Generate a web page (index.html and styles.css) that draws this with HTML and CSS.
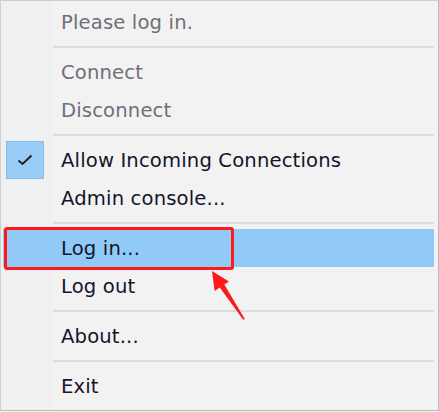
FILE: index.html
```html
<!DOCTYPE html>
<html>
<head>
<meta charset="utf-8">
<link rel="stylesheet" href="styles.css">
</head>
<body>
<div class="menu">
  <div class="item disabled"><span class="label">Please log in.</span></div>
  <div class="sep"></div>
  <div class="item disabled"><span class="label">Connect</span></div>
  <div class="item disabled"><span class="label">Disconnect</span></div>
  <div class="sep"></div>
  <div class="item">
    <span class="check"><svg width="16" height="12" viewBox="0 0 16 12"><path d="M1.5 6.5 L5.5 10 L14.5 1.5" fill="none" stroke="#222" stroke-width="2"/></svg></span>
    <span class="label">Allow Incoming Connections</span>
  </div>
  <div class="item"><span class="label">Admin console...</span></div>
  <div class="sep"></div>
  <div class="item active"><span class="label">Log in...</span><span class="redbox"></span></div>
  <div class="item"><span class="label">Log out</span></div>
  <div class="sep"></div>
  <div class="item"><span class="label">About...</span></div>
  <div class="sep"></div>
  <div class="item"><span class="label">Exit</span></div>
  <svg class="arrow" width="60" height="60" viewBox="0 0 60 60">
    <polygon points="12,2 29,12.4 24.3,15.6 44.8,50 43.2,50.8 19.8,18.6 14.6,22" fill="#ff1a1a"/>
  </svg>
</div>
</body>
</html>
```
FILE: styles.css
```css
html, body {
  margin: 0;
  padding: 0;
  background: #f4f4f4;
}
.menu {
  position: relative;
  box-sizing: border-box;
  width: 439px;
  height: 411px;
  padding-top: 2px;
  border: 1px solid #cfcfcf;
  border-right-color: #b9b9b9;
  border-bottom-color: #b9b9b9;
  background: linear-gradient(to right, #f0f0f0 0, #f0f0f0 51px, #f2f2f2 51px);
  font-family: "DejaVu Sans", "Noto Sans", sans-serif;
  font-size: 19.6px;
  letter-spacing: 0.15px;
}
.item {
  position: relative;
  display: flex;
  align-items: center;
  height: 38px;
  margin: 0 4px 0 2px;
  padding-left: 58px;
  color: #15152a;
}
.item.disabled {
  color: #6f6f78;
}
.item.active {
  background: #91c9f7;
}
.label {
  line-height: 38px;
  padding-top: 2px;
}
.check {
  position: absolute;
  left: 3px;
  top: 0;
  width: 36px;
  height: 36px;
  border: 1px solid #86bdef;
  background: #99cdf8;
  display: flex;
  align-items: center;
  justify-content: center;
}
.sep {
  height: 12px;
  margin: 0 4px 0 52px;
  display: flex;
  align-items: center;
}
.sep::before {
  content: "";
  display: block;
  width: 100%;
  height: 2px;
  background: #dcdcdc;
}
.redbox {
  position: absolute;
  left: 1px;
  top: -2px;
  width: 230px;
  height: 43px;
  box-sizing: border-box;
  border: 3px solid #ff1a1a;
  border-radius: 3px;
}
.arrow {
  position: absolute;
  left: 199px;
  top: 268px;
}
```
